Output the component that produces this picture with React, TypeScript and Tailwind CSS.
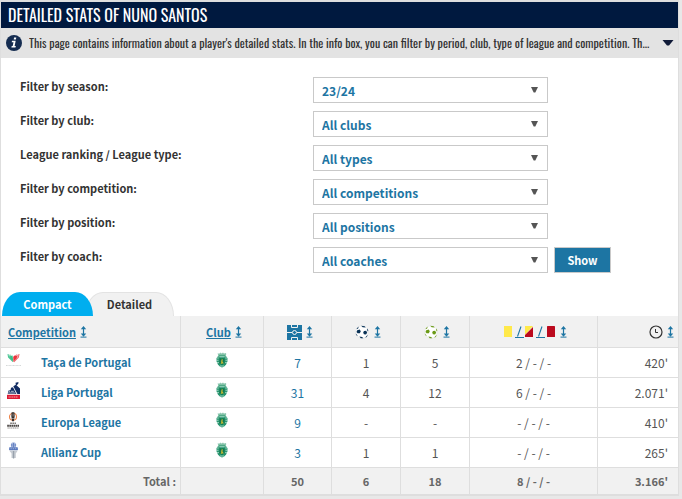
import React from 'react';

const filters = [
  { id: 'season', label: 'Filter by season:', value: '23/24' },
  { id: 'club', label: 'Filter by club:', value: 'All clubs' },
  { id: 'type', label: 'League ranking / League type:', value: 'All types' },
  { id: 'competition', label: 'Filter by competition:', value: 'All competitions' },
  { id: 'position', label: 'Filter by position:', value: 'All positions' },
  { id: 'coach', label: 'Filter by coach:', value: 'All coaches' },
];

function SortIcon() {
  return (
    <svg className="inline-block shrink-0" width="7" height="12" viewBox="0 0 7 12" fill="#1d75a3">
      <path d="M3.500 0 6.200 3.200H.8Z" />
      <path d="M2.900 2.500h1.200v6H2.900z" />
      <path d="M3.500 10.800.8 7.600H6.200Z" />
      <path d="M.5 10.600h6v1h-6z" />
    </svg>
  );
}

function PitchIcon() {
  return (
    <svg width="15" height="15" viewBox="0 0 15 15">
      <path fill="#1d75a3" d="M0 0h15v15H0z" />
      <g fill="none" stroke="#f1f1f1">
        <path d="M0 7.500h5M10 7.500h5M4.500 0v2.500h6V0M4.500 15v-2.500h6V15" />
        <circle cx="7.500" cy="7.500" r="2" />
      </g>
    </svg>
  );
}

function BallIcon({ color }: { color: string }) {
  return (
    <svg width="14" height="14" viewBox="0 0 14 14">
      <circle cx="7" cy="7" r="6.200" fill="#fff" stroke="#dfe1e2" strokeWidth=".5" />
      <g fill={color}>
        <path d="M2.200 5.200 4.700 4.500 5.800 6.200 4.800 8.300 2.600 8.300 1.500 6.900Z" />
        <path d="M9 6 11.200 5.800 12.200 7.700 11 9.600 8.900 9.200 8.200 7.500Z" />
        <path d="M6.200.7 9.700 1.200 10.700 2.600 7.700 2.300Z" />
        <path d="M1.700 3.400 3.600 1.600 3.300 3.200 1.900 4.300Z" />
        <path d="M12.200 3.500 13.300 5.800 12.900 6.600 11.900 4.800Z" />
        <path d="M4.300 11.600 7.100 12 8.300 13.300 5.800 13.300Z" />
        <path d="M.8 8.400 2.400 10.500 2.300 11.200 1 9.600Z" />
        <path d="M12.800 9.800 11.800 12 10.200 12.700 11.600 10.900Z" />
      </g>
    </svg>
  );
}

function CardsIcon() {
  return (
    <svg width="51" height="14" viewBox="0 0 51 14">
      <path fill="#ffe94a" d="M0 1h8v11H0z" />
      <path stroke="#1d75a3" strokeWidth="1.100" d="M13.500 11.500 17 1.500M34.500 11.500 38 1.500" />
      <path fill="#1d75a3" d="M11 12h9v1h-9zM32 12h9v1h-9z" />
      <path fill="#ffe94a" d="M21 1h8L21 10z" />
      <path fill="#bb0a1e" d="M29 2v10h-8v-2z" />
      <rect x="43" y="1" width="8" height="11" rx=".6" fill="#bb0a1e" />
    </svg>
  );
}

function ClockIcon() {
  return (
    <svg width="14" height="14" viewBox="0 0 14 14" fill="none" stroke="#333">
      <circle cx="7" cy="7" r="6" strokeWidth="1.200" />
      <path d="M6.500 4v3.500H9" />
    </svg>
  );
}

function ClubCrest() {
  return (
    <svg className="mx-auto mb-[5px] block" width="12" height="16" viewBox="0 0 12 16">
      <path fill="#8fc7b0" d="M1.500 1.500h2L4.500.6l1 .9L7 .4l1 1.100 2-.6.3 1.300L9.500 3.800h-7Z" />
      <path fill="#4ea884" d="M2.500 2.800h7v1.400h-7z" />
      <path fill="#2a9670" d="M1.800 4.200h8.400l1.300 2.200-.1 3.200-1.300 3-1.900 2L6 15.600l-2.200-1-1.900-2-1.300-3-.1-3.200Z" />
      <path stroke="#b4dfcf" strokeWidth=".8" d="M.6 6h2.200M9.200 6h2.200M.5 8.300h2M9.500 8.300h2M1 10.600h2M9 10.600h2M3.500 4.800h5M4 14h4" />
      <path fill="#0e7a52" d="M3.400 6.200h5.200v5L6 13.200l-2.600-2Z" />
      <path fill="#c9bb36" d="m5.800 6.400 1 1.400-.4 1.500 1.400 2.300H6.300l-1.700.3.900-2.100-.7-.6.8-1Z" />
    </svg>
  );
}

function TacaLogo() {
  return (
    <svg width="15" height="16" viewBox="0 0 15 16">
      <path fill="none" stroke="#4cc694" strokeWidth="1.100" d="M2 2.200 2.600 5.200 7 9.700M4.200 2.600 3.600 5l3 2.500" />
      <path fill="#39bd87" d="M4 4 6.600 3.600 7.200 9.500 4.700 6.800Z" />
      <path fill="#e9343c" d="M7.200 4.800 9 3.200 11.200 4 10.600 6.800 7.400 9.800Z" />
      <path fill="none" stroke="#f06a70" strokeWidth="1.100" d="M13 2 12.400 5.200 7.800 9.900M10.600 2.400 11.600 4.500" />
      <path stroke="#c4c8c8" strokeWidth=".7" strokeDasharray="1 .4" d="M0 13.500h15" />
    </svg>
  );
}

function LigaLogo() {
  return (
    <svg width="15" height="18" viewBox="0 0 15 18">
      <path fill="#102b62" d="M9.500.8 12.500 0 12.200 2 10.500 3.200 14 6.500V12H11.400L7.300 4.200 9.800 2.800Z" />
      <path fill="#102b62" d="M5 5.800 7 5.200 10.400 12H1.800L2.200 8.800 4.600 8Z" />
      <path stroke="#fff" strokeWidth=".7" d="M2.500 9.300h1.500M4.800 9.300h3M2 11h7.500" />
      <path fill="#dc1933" d="M1 12.800h13v4.200H1z" />
      <path stroke="#f7a8b2" strokeWidth="1" strokeDasharray="1.300 .5" d="M2.500 15h9.500" />
    </svg>
  );
}

function EuropaLogo() {
  return (
    <svg width="15" height="18" viewBox="0 0 15 18">
      <circle cx="7" cy="4.800" r="3.500" fill="none" stroke="#ee8247" strokeWidth="1.100" />
      <path fill="#342f2e" d="M5.600.3h2.800L8.700 4l-.8 5.200H6.100L5.300 4Z" />
      <path stroke="#b8aaa2" strokeWidth=".7" d="M7.100 1.500v3M6 6.500h2" />
      <path stroke="#7d7977" strokeWidth="1.400" strokeDasharray="1.700 .5" d="M4.200 11.200h5.800" />
      <path stroke="#4a4644" strokeWidth="1.900" strokeDasharray="1.700 .4" d="M1.200 13.800h11.800" />
      <path stroke="#8e8a88" strokeWidth="1.200" strokeDasharray="1.300 .5" d="M1.500 16h11.300" />
    </svg>
  );
}

function AllianzLogo() {
  return (
    <svg width="15" height="18" viewBox="0 0 15 18">
      <circle cx="7.500" cy="3" r="2.700" fill="#a7b9e0" />
      <path stroke="#5876ba" strokeWidth=".8" d="M7.500 1v4M5.800 2v2.500M9.200 2v2.500" />
      <rect x="3" y="5.200" width="9" height="3" rx="1" fill="#5575bb" />
      <path stroke="#c2cfeb" strokeWidth=".7" strokeDasharray="1 .8" d="M3.500 6.700h8" />
      <path fill="#c6cbd2" d="M3.200 8.400h8.600L9.800 11.500V16H5.500v-4.500Z" />
      <path fill="#98a1ac" d="M6.900 9h1.300v7.500H6.900z" />
    </svg>
  );
}

const rows = [
  { logo: <TacaLogo />, name: 'Taça de Portugal', games: '7', goals: '1', assists: '5', cards: '2 / - / -', minutes: "420'" },
  { logo: <LigaLogo />, name: 'Liga Portugal', games: '31', goals: '4', assists: '12', cards: '6 / - / -', minutes: "2.071'" },
  { logo: <EuropaLogo />, name: 'Europa League', games: '9', goals: '-', assists: '-', cards: '- / - / -', minutes: "410'" },
  { logo: <AllianzLogo />, name: 'Allianz Cup', games: '3', goals: '1', assists: '1', cards: '- / - / -', minutes: "265'" },
];

const th = 'border-r border-b border-[#dedede] p-0 pt-px font-bold last:border-r-0';
const td = 'border-r border-b border-[#dedede] p-0 text-center last:border-r-0';
const total = 'border-r border-[#dedede] p-0 text-center last:border-r-0';

export default function App() {
  return (
    <div className="min-h-screen bg-[#e8e8e8] pr-[3px] font-['Noto_Sans_CJK_SC',sans-serif] text-[11px] text-[#333]">
      <main className="border-x border-t-2 border-b-2 border-[#dedede] bg-white">
        <h1 className="h-[26px] truncate bg-[#00193f] px-[7px] font-['Oswald','Liberation_Sans_Narrow',sans-serif] text-base leading-[26px] text-white">
          DETAILED STATS OF NUNO SANTOS
        </h1>
        <button
          type="button"
          className="flex h-[30px] w-full items-center bg-[#e3e3e3] pr-1 pl-[5px] text-left font-['Oswald','Liberation_Sans_Narrow',sans-serif] text-xs"
        >
          <svg className="mr-[7px] shrink-0" width="16" height="16" viewBox="0 0 16 16">
            <circle cx="8" cy="8" r="8" fill="#152c50" />
            <path fill="#fff" d="M8.100 2.500h2.200l-.4 2H7.700ZM6 5.700h3.700L8.600 11h1.200l-.3 1.500H5.400L5.700 11h1l.8-3.800H5.700Z" />
          </svg>
          <span className="min-w-0 flex-1 truncate">
            This page contains information about a player's detailed stats. In the info box, you can filter by period, club, type of league and competition. Th...
          </span>
          <svg className="ml-2 shrink-0" width="12" height="6" viewBox="0 0 12 6">
            <path fill="#101a38" d="M.5 0h11L7 5.500H5Z" />
          </svg>
        </button>

        <form className="flex flex-col gap-2 pt-[19px] pb-[19px] pl-[19px]" onSubmit={(e) => e.preventDefault()}>
          {filters.map((f) => (
            <div key={f.id} className="flex items-start">
              <label htmlFor={f.id} className="w-[293px] shrink-0 leading-[18px] font-bold">
                {f.label}
              </label>
              <div className="relative">
                <select
                  id={f.id}
                  defaultValue={f.value}
                  className="block h-[26px] w-[235px] appearance-none border border-[#c9c9c9] bg-white px-2 pt-px text-xs leading-6 font-bold text-[#1d75a3]"
                >
                  <option>{f.value}</option>
                </select>
                <svg className="pointer-events-none absolute top-[10px] right-[10px]" width="7" height="6" viewBox="0 0 7 6">
                  <path fill="#555" d="M0 0h7L4.300 5.500H2.700Z" />
                </svg>
              </div>
              {f.id === 'coach' && (
                <button
                  type="submit"
                  className="ml-1.5 h-[26px] w-[57px] border border-[#c9c9c9] bg-[#1d75a3] font-bold text-white"
                >
                  Show
                </button>
              )}
            </div>
          ))}
        </form>

        <div className="flex h-6 pl-px font-bold">
          <button type="button" className="z-10 w-[91px] rounded-[18px_18px_0_0/24px_24px_0_0] bg-[#00aeef] text-white">
            Compact
          </button>
          <button type="button" className="-ml-2 w-[89px] rounded-[18px_18px_0_0/24px_24px_0_0] border border-b-0 border-[#e3e3e3] bg-[#f1f1f1] pb-px text-[#333]">
            Detailed
          </button>
        </div>

        <table className="w-full table-fixed border-separate border-spacing-0">
          <colgroup>
            <col />
            <col className="w-[83px]" />
            <col className="w-[68px]" />
            <col className="w-[69px]" />
            <col className="w-[69px]" />
            <col className="w-[128px]" />
            <col className="w-[80px]" />
          </colgroup>
          <thead className="bg-[#f1f1f1] text-[#1d75a3]">
            <tr className="h-8">
              <th scope="col" className={th}>
                <div className="flex items-center gap-1 pl-[7px]">
                  <a href="#competition" className="underline">Competition</a>
                  <SortIcon />
                </div>
              </th>
              <th scope="col" className={th}>
                <div className="flex items-center justify-center gap-1 pl-1">
                  <a href="#club" className="underline">Club</a>
                  <SortIcon />
                </div>
              </th>
              <th scope="col" aria-label="Games" className={th}>
                <div className="flex items-center justify-center gap-1 pl-1">
                  <PitchIcon />
                  <SortIcon />
                </div>
              </th>
              <th scope="col" aria-label="Goals" className={th}>
                <div className="flex items-center justify-center gap-[5px] pl-1">
                  <BallIcon color="#0b3357" />
                  <SortIcon />
                </div>
              </th>
              <th scope="col" aria-label="Assists" className={th}>
                <div className="flex items-center justify-center gap-[5px] pl-1">
                  <BallIcon color="#6b9a17" />
                  <SortIcon />
                </div>
              </th>
              <th scope="col" aria-label="Cards" className={th}>
                <div className="flex items-center justify-center gap-[5px] pl-1">
                  <CardsIcon />
                  <SortIcon />
                </div>
              </th>
              <th scope="col" aria-label="Minutes" className={th}>
                <div className="flex items-center justify-end gap-1 pr-1">
                  <ClockIcon />
                  <SortIcon />
                </div>
              </th>
            </tr>
          </thead>
          <tbody className="text-xs text-[#555]">
            {rows.map((r) => (
              <tr key={r.name} className="h-[30px]">
                <td className={td}>
                  <div className="flex items-center gap-5 pl-[5px]">
                    <span className="flex h-[22px] w-[15px] items-start">{r.logo}</span>
                    <a href="#competition" className="text-[11px] font-bold text-[#1d75a3]">{r.name}</a>
                  </div>
                </td>
                <td className={td}><ClubCrest /></td>
                <td className={td + ' text-[#1d75a3]'}>{r.games}</td>
                <td className={td}>{r.goals}</td>
                <td className={td}>{r.assists}</td>
                <td className={td}>{r.cards}</td>
                <td className={td}><div className="pr-2.5 text-right">{r.minutes}</div></td>
              </tr>
            ))}
          </tbody>
          <tfoot className="bg-[#f1f1f1] font-bold text-[#666]">
            <tr className="h-[26px]">
              <td className={total}><div className="pr-1 text-right">Total :</div></td>
              <td className={total} />
              <td className={total}>50</td>
              <td className={total}>6</td>
              <td className={total}>18</td>
              <td className={total}>8 / - / -</td>
              <td className={total}><div className="pr-2.5 text-right">3.166'</div></td>
            </tr>
          </tfoot>
        </table>
      </main>
    </div>
  );
}
